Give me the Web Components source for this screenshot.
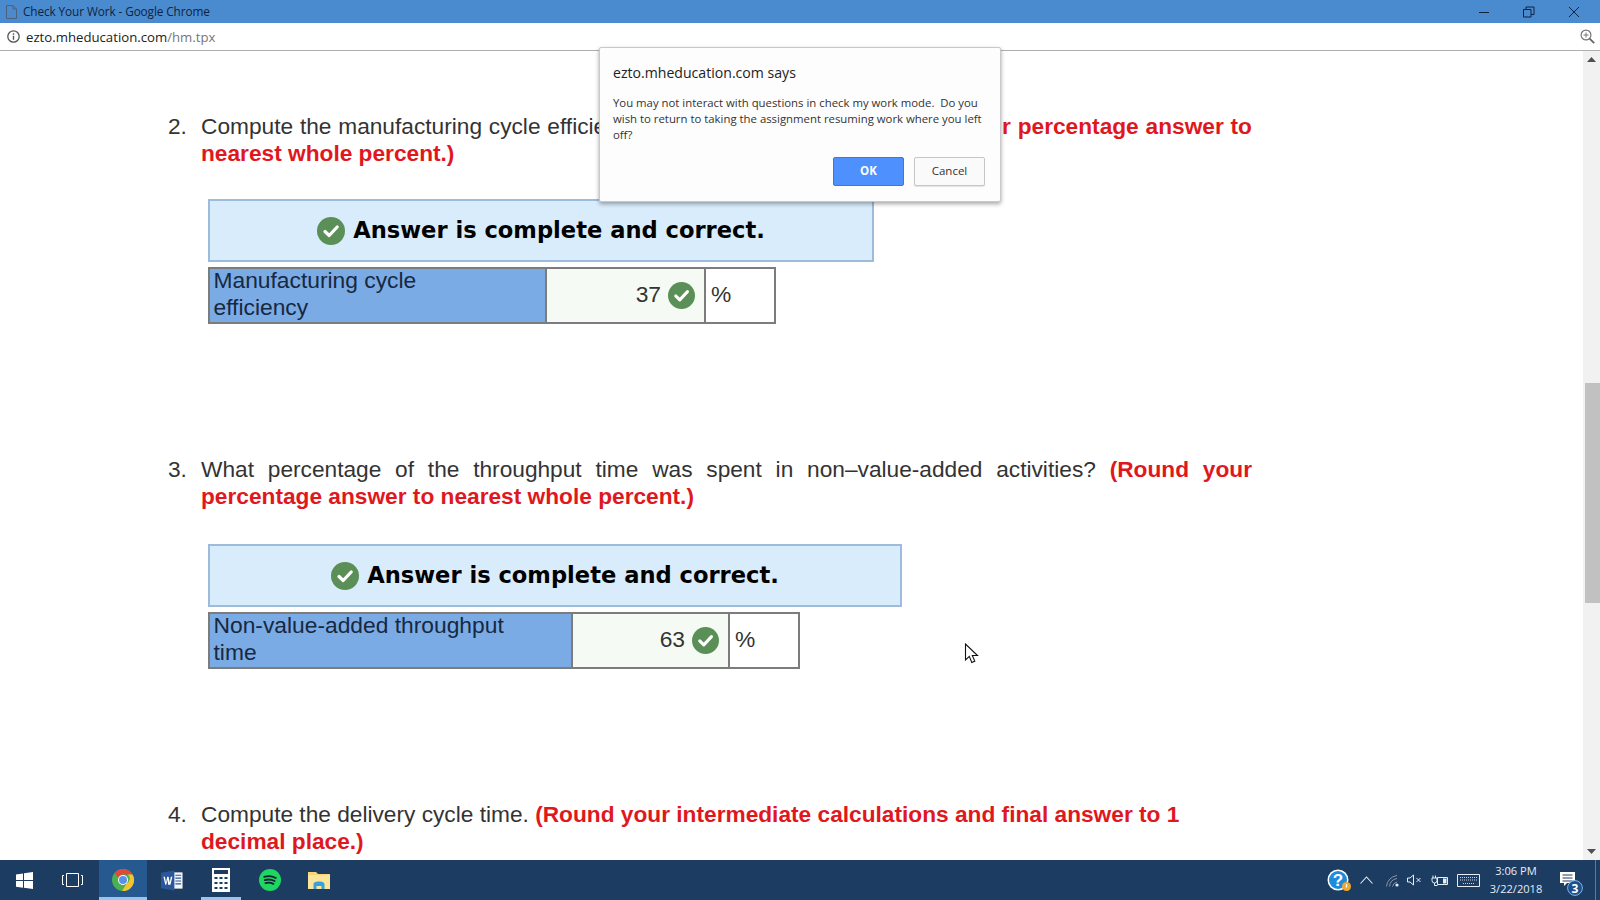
<!DOCTYPE html>
<html><head><meta charset="utf-8"><title>Check Your Work - Google Chrome</title>
<style>
html,body{margin:0;height:100%;overflow:hidden;background:#fff}
</style></head><body>
<desk-top>
  <title-bar slot="top">Check Your Work - Google Chrome</title-bar>
  <address-bar slot="top"></address-bar>
  <q-item n="2." justify>Compute the manufacturing cycle <span style="word-spacing:49.5px">efficiency (MCE). </span><b><span style="word-spacing:49.5px">(Round </span>your percentage answer to nearest whole percent.)</b></q-item>
  <answer-box bw="666" gap="32" c1="337" c2="159" c3="68" value="37">Manufacturing cycle<br>efficiency</answer-box>
  <q-item n="3." justify style="margin-top:132px">What percentage of the throughput time was spent in non–value-added activities? <b>(Round your percentage answer to nearest whole percent.)</b></q-item>
  <answer-box bw="694" gap="34" c1="363" c2="157" c3="68" value="63">Non-value-added throughput<br>time</answer-box>
  <q-item n="4." style="margin-top:132px">Compute the delivery cycle time. <b>(Round your intermediate calculations and final answer to 1 decimal place.)</b></q-item>
  <alert-dialog slot="over"></alert-dialog>
  <mouse-cursor slot="over"></mouse-cursor>
  <task-bar slot="bottom"></task-bar>
</desk-top>
<script>
const define=(name,html)=>customElements.define(name,class extends HTMLElement{
  connectedCallback(){ if(this.shadowRoot)return; const r=this.attachShadow({mode:'open'}); r.innerHTML=typeof html==='function'?html(this):html; }
});
const CHECK=(s)=>`<svg viewBox="0 0 28 28" width="${s}" height="${s}" style="flex:none;display:block"><circle cx="14" cy="14" r="14" fill="#5a8f57"/><path d="M8 14.5l4.2 4L20.2 10" fill="none" stroke="#fff" stroke-width="3.2" stroke-linecap="round" stroke-linejoin="round"/></svg>`;

define('desk-top',`<style>
:host{display:flex;flex-direction:column;width:1600px;height:900px;position:relative;overflow:hidden;font-family:"Liberation Sans",Arial,sans-serif}
.main{flex:1;display:flex;min-height:0}
.page{flex:1;min-width:0;padding:62px 0 0 0;overflow:hidden;box-sizing:border-box}
</style>
<slot name="top"></slot>
<div class="main"><div class="page"><slot></slot></div><scroll-bar></scroll-bar></div>
<slot name="bottom"></slot>
<slot name="over"></slot>`);

define('title-bar',`<style>
:host{display:flex;align-items:center;height:23px;background:#4a8bd0;color:#10233c;font:11.8px "Open Sans",sans-serif;flex:none;position:relative}
.doc{margin:0 6px 0 6px;display:block}
.t{flex:1;letter-spacing:-.1px;white-space:nowrap;padding-bottom:2px}
.w{display:flex;margin-right:4px}
.b{width:45px;height:23px;display:flex;align-items:center;justify-content:center}
</style>
<svg class="doc" width="11" height="14" viewBox="0 0 11 14"><path d="M.5.5h6.5l3.500 3.500v9.500h-10z M7 .5v3.500h3.500" fill="none" stroke="#4c617a" stroke-width="1"/></svg>
<span class="t"><slot></slot></span>
<div class="w">
<div class="b"><svg width="12" height="12" viewBox="0 0 12 12"><path d="M1 6.500h10" stroke="#10233c" stroke-width="1"/></svg></div>
<div class="b"><svg width="12" height="12" viewBox="0 0 12 12"><path d="M.5 3.500h7.500v7.500h-7.500z M3 3.500v-2.500h8v7.500h-3" fill="none" stroke="#10233c" stroke-width="1"/></svg></div>
<div class="b"><svg width="12" height="12" viewBox="0 0 12 12"><path d="M1 1l10 10M11 1l-10 10" stroke="#10233c" stroke-width="1"/></svg></div>
</div>`);

define('address-bar',`<style>
:host{display:flex;align-items:center;height:27px;background:#fff;border-bottom:1px solid #aeaeae;box-sizing:content-box;flex:none;font:13.2px "Open Sans",sans-serif;color:#222}
.i{margin:0 5px 0 6px;display:block}
.u{flex:1;white-space:nowrap}
.u span{color:#777}
.z{margin-right:5px;display:block}
</style>
<svg class="i" width="15" height="15" viewBox="0 0 15 15"><circle cx="7.500" cy="7.500" r="5.700" fill="none" stroke="#555" stroke-width="1.300"/><path d="M7.500 6.800v4M7.500 4.200v1.500" stroke="#555" stroke-width="1.400"/></svg>
<div class="u">ezto.mheducation.com<span>/hm.tpx</span></div>
<svg class="z" width="15" height="15" viewBox="0 0 15 15"><circle cx="6" cy="6" r="4.900" fill="none" stroke="#777" stroke-width="1.200"/><path d="M3.500 6h5M6 3.500v5" stroke="#777" stroke-width="1"/><path d="M9.600 9.600l4.600 4.600" stroke="#666" stroke-width="1.800"/></svg>`);

define('scroll-bar',`<style>
:host{display:flex;flex-direction:column;width:17px;background:#f1f1f1;flex:none}
.a{height:17px;display:flex;align-items:center;justify-content:center;flex:none}
.s1{height:315px}.th{height:220px;background:#c1c1c1;margin-left:2px}.s2{flex:1}
</style>
<div class="a"><svg width="9" height="5" viewBox="0 0 9 5"><path d="M4.500 0L9 5H0z" fill="#505050"/></svg></div>
<div class="s1"></div><div class="th"></div><div class="s2"></div>
<div class="a"><svg width="9" height="5" viewBox="0 0 9 5"><path d="M4.500 5L9 0H0z" fill="#505050"/></svg></div>`);

define('q-item',(h)=>`<style>
:host{display:flex;margin-left:168px;width:1084px;font-size:22.7px;line-height:27px;color:#333}
.n{width:33px;flex:none}
.t{flex:1;${h.hasAttribute('justify')?'text-align:justify':''}}
::slotted(b){color:#e0181e}
</style><div class="n">${h.getAttribute('n')}</div><div class="t"><slot></slot></div>`);

define('answer-box',(h)=>{const g=h.getAttribute('gap'),bw=+h.getAttribute('bw'),c1=+h.getAttribute('c1'),c2=+h.getAttribute('c2'),c3=+h.getAttribute('c3');
return `<style>
:host{display:block;margin:${g}px 0 0 208px}
.ban{width:${bw}px;height:63px;box-sizing:border-box;border:2px solid #9dbcdb;background:#d9ecfb;display:flex;align-items:center;justify-content:center;gap:8px;font:bold 22.6px "DejaVu Sans",Verdana,sans-serif;color:#000;white-space:nowrap}
.ban span{padding-bottom:2px}
.tb{display:grid;grid-template-columns:${c1}px ${c2}px ${c3}px;width:max-content;height:57px;margin-top:5px;box-sizing:border-box;border:2px solid #7c7c7c;font-size:22.8px;line-height:26.5px;color:#333}
.l{background:#7aabe5;padding:0 0 2px 3.5px;border-right:2px solid #7c7c7c;color:#17283f;overflow:hidden;white-space:nowrap;box-sizing:border-box;display:flex;align-items:center}
.l div{margin-top:-2px}
.v{background:#f5fbf4;border-right:2px solid #7c7c7c;display:flex;align-items:center;justify-content:flex-end;gap:7px;padding-right:9px;box-sizing:border-box}
.v span{padding-bottom:3px}
.u{padding:0 0 3px 5px;display:flex;align-items:center;box-sizing:border-box}
</style>
<div class="ban">${CHECK(28)}<span>Answer is complete and correct.</span></div>
<div class="tb"><div class="l"><div><slot></slot></div></div><div class="v"><span>${h.getAttribute('value')}</span>${CHECK(27)}</div><div class="u">%</div></div>`});

define('alert-dialog',`<style>
:host{position:absolute;left:599px;top:47px;width:402px;height:155px;box-sizing:border-box;background:#fdfdfe;border:1px solid #c9c9c9;border-radius:2px;box-shadow:0 2px 4px rgba(0,0,0,.35);padding:15px 13px 0 13px;font-family:"Open Sans",sans-serif;color:#333;display:flex;flex-direction:column}
.h{font-size:14.1px;line-height:19px;color:#222;white-space:nowrap}
.m{font-size:11.36px;line-height:16px;margin-top:13px;white-space:pre;color:#333}
.r{display:flex;justify-content:flex-end;gap:10px;margin-top:auto;margin-bottom:15px;padding-right:2px}
.b{width:71px;height:29px;box-sizing:border-box;border-radius:2px;display:flex;align-items:center;justify-content:center;font-size:11.5px;padding-bottom:2px}
.ok{background:#4d90fe;border:1px solid #3b78d8;color:#fff;font-weight:700}
.c{background:#fafafa;border:1px solid #c6c6c6;color:#333;box-shadow:0 1px 1px rgba(0,0,0,.1)}
</style>
<div class="h">ezto.mheducation.com says</div>
<div class="m">You may not interact with questions in check my work mode.  Do you
wish to return to taking the assignment resuming work where you left
off?</div>
<div class="r"><div class="b ok">OK</div><div class="b c">Cancel</div></div>`);

define('mouse-cursor',`<style>:host{position:absolute;left:964px;top:643px;display:block;width:16px;height:22px}</style>
<svg width="16" height="22" viewBox="0 0 16 22"><path d="M1.500 1v16l3.800-3.600 2.500 6 3-1.300-2.500-5.600h5.200z" fill="#fff" stroke="#111" stroke-width="1.100"/></svg>`);

define('task-bar',`<style>
:host{display:flex;align-items:center;height:40px;background:#1c3c62;flex:none;color:#e6ecf3;font:11.1px "Open Sans",sans-serif}
.c{display:flex;align-items:center;justify-content:center;height:40px;box-sizing:border-box;flex:none}
.c svg{flex:none;display:block}
.act{background:#26598f;border-bottom:3px solid #9cc4ea}
.und{border-bottom:3px solid #9cc4ea}
.sp{flex:1}
.clock{width:64px;text-align:center;line-height:18px;white-space:nowrap;padding-bottom:1px}
.badge{position:absolute;left:14px;top:22px;width:9px;height:9px}
</style>
<div class="c" style="width:48px"><svg width="17" height="17" viewBox="0 0 17 17"><path d="M0 2.400l7-1v6.700H0zM8 1.200l9-1.200v8.100H8zM0 9h7v6.700l-7-1zM8 9h9v8l-9-1.200z" fill="#fff"/></svg></div>
<div class="c" style="width:49px;margin-right:2px"><svg width="21" height="14" viewBox="0 0 21 14"><path d="M4.500.5h12v13h-12z" fill="none" stroke="#fff"/><path d="M2 2.500H.5v9H2M19 2.500h1.500v9H19" fill="none" stroke="#fff"/></svg></div>
<div class="c act" style="width:48px;padding-top:3px"><svg width="22" height="22" viewBox="0 0 22 22"><circle cx="11" cy="11" r="11" fill="#4caf50"/><path d="M11 0a11 11 0 0 1 9.500 5.500H11a5.500 5.500 0 0 0-5 3.200L2.700 3.900A11 11 0 0 1 11 0z" fill="#e0483c"/><path d="M20.500 5.500A11 11 0 0 1 10 22l4.700-7.500A5.500 5.500 0 0 0 16 5.500z" fill="#f4c430"/><circle cx="11" cy="11" r="5" fill="#fff"/><circle cx="11" cy="11" r="4" fill="#5b8fe8"/></svg></div>
<div class="c" style="width:49px"><svg width="22" height="21" viewBox="0 0 23 21"><path d="M13 2h9.500v17H13z" fill="#f4f6fa"/><path d="M15 5h6M15 8h6M15 11h6M15 14h6" stroke="#2b579a" stroke-width="1.200"/><path d="M0 2.500L14 0v21L0 18.500z" fill="#2b579a"/><path d="M2.500 6.500h1.600l1.100 6 1.300-6h1.400l1.300 6 1.100-6h1.600l-2 8.500H7.500L6.700 9.600 5.500 15H4.500z" fill="#fff"/></svg></div>
<div class="c und" style="width:40px;margin:0 4px 0 5px;padding-top:3px"><svg width="18" height="24" viewBox="0 0 18 24"><path d="M0 0h18v24H0z" fill="#fff"/><path d="M2 2h14v4H2z" fill="#1c3c62"/><path d="M2.500 9h3v2h-3zM7.500 9h3v2h-3zM12.500 9h3v2h-3zM2.500 14h3v2h-3zM7.500 14h3v2h-3zM12.500 14h3v2h-3zM2.500 19h3v2h-3zM7.500 19h3v2h-3zM12.500 19h3v2h-3z" fill="#1c3c62"/></svg></div>
<div class="c" style="width:49px"><svg width="22" height="22" viewBox="0 0 23 23"><circle cx="11.500" cy="11.500" r="11.500" fill="#1ed760"/><path d="M5.500 8.300c4-1.200 8.400-.9 12 1.100M6 11.600c3.400-1 7.200-.7 10.300 1M6.700 14.700c2.800-.8 5.800-.5 8.400.9" fill="none" stroke="#123" stroke-width="1.900" stroke-linecap="round"/></svg></div>
<div class="c" style="width:49px"><svg width="22" height="19" viewBox="0 0 22 19"><path d="M0 1h8l2 2h12v15H0z" fill="#f7d774"/><path d="M0 4h22v14H0z" fill="#fbe59c"/><path d="M5.500 18v-4.500c0-2 1.500-3 5.500-3s5.500 1 5.500 3V18h-3v-3h-5v3z" fill="#39a0dc"/></svg></div>
<div class="sp"></div>
<div class="c" style="width:20px;position:relative"><svg width="22" height="22" viewBox="0 0 22 22"><circle cx="11" cy="11" r="10.500" fill="#fff"/><circle cx="11" cy="11" r="9" fill="#1f8bdb"/><text x="11" y="17" text-anchor="middle" font-family="Liberation Sans" font-weight="700" font-size="17" fill="#fff">?</text></svg><span class="badge"><svg width="9" height="9" viewBox="0 0 9 9"><circle cx="4.500" cy="4.500" r="4.500" fill="#f0a830"/><path d="M4.500 2v3.500" stroke="#fff" stroke-width="1.200"/></svg></span></div>
<div class="c" style="width:36px"><svg width="13" height="8" viewBox="0 0 13 8"><path d="M.5 7.500l6-6.500 6 6.500" fill="none" stroke="#e6ecf3" stroke-width="1.100"/></svg></div>
<div class="c" style="width:18px"><svg width="14" height="13" viewBox="0 0 14 13"><path d="M.5 12.500A12 12 0 0 1 11 1.500M3.500 12.500A9 9 0 0 1 11 4.500M6.500 12.500A6 6 0 0 1 11 8" fill="none" stroke="#8796ab" stroke-width="1"/><circle cx="11" cy="11" r="1.600" fill="#e6ecf3"/></svg></div>
<div class="c" style="width:24px"><svg width="15" height="12" viewBox="0 0 15 12"><path d="M.5 4h2.500l3.500-3v10L3 8H.5z" fill="none" stroke="#e6ecf3"/><path d="M9.500 4l4 4M13.500 4l-4 4" stroke="#e6ecf3"/></svg></div>
<div class="c" style="width:26px;margin-right:1px"><svg width="17" height="11" viewBox="0 0 17 11"><path d="M6.500 2.500h10v7h-10z" fill="none" stroke="#e6ecf3"/><path d="M2 .5v2.500M4.500 .5v2.500M1 3h5v2.500a2.500 2.500 0 0 1-5 0zM3.500 8v2.500h3" fill="none" stroke="#e6ecf3"/><path d="M12 3.500h3.500v5H12z" fill="#e6ecf3"/></svg></div>
<div class="c" style="width:30px;margin-right:1px"><svg width="23" height="13" viewBox="0 0 23 13"><path d="M.5.5h22v12H.5z" fill="none" stroke="#e6ecf3"/><path d="M3 3.500h17M3 6h17M6 9.500h11" stroke="#c9d3de" stroke-dasharray="1 1" stroke-width="1.100"/></svg></div>
<div class="c clock"><div>3:06 PM<br>3/22/2018</div></div>
<div class="c" style="width:47px"><svg width="26" height="32" viewBox="0 0 26 32"><path d="M1 8h15v11h-8l-3 3v-3H1z" fill="#fff"/><path d="M3.500 11h10M3.500 14h10M3.500 17h10" stroke="#1c3c62"/><circle cx="16" cy="24" r="7.400" fill="#1f4f8a" stroke="#79b7ee" stroke-width="1"/><text x="16" y="28.500" text-anchor="middle" font-family="Open Sans" font-weight="700" font-size="12" fill="#fff">3</text></svg></div>
<div style="width:1px;height:40px;background:#5a7a9e;flex:none"></div>
<div style="width:4px;flex:none"></div>`);
</script>
</body></html>
